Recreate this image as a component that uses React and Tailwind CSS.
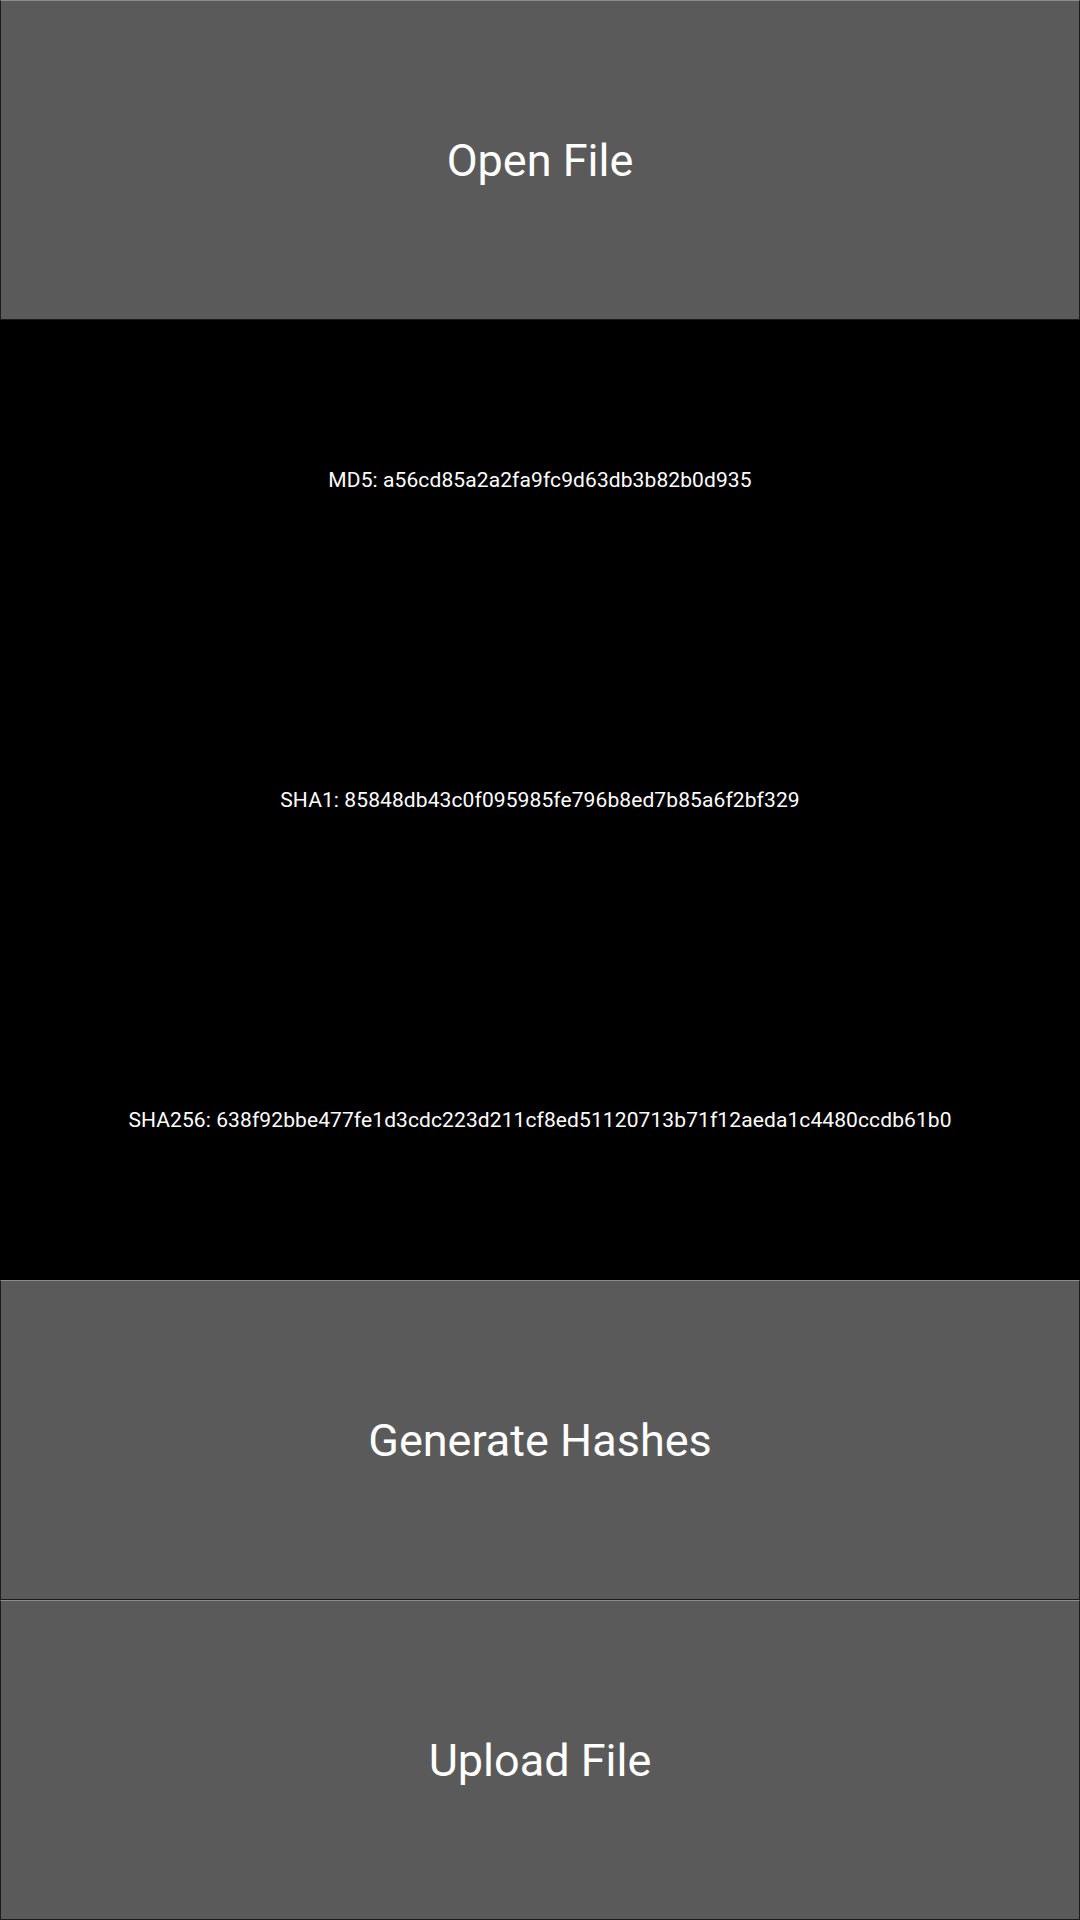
import React from 'react';

const hashes = [
  { label: 'MD5', value: 'a56cd85a2a2fa9fc9d63db3b82b0d935' },
  { label: 'SHA1', value: '85848db43c0f095985fe796b8ed7b85a6f2bf329' },
  { label: 'SHA256', value: '638f92bbe477fe1d3cdc223d211cf8ed51120713b71f12aeda1c4480ccdb61b0' },
];

const ActionButton = ({ children }) => (
  <button className="h-[320px] w-full bg-[#5a5a5a] border border-[#1c1c1c] border-t-[#8c8c8c] text-white text-[45px] flex items-center justify-center pt-[2px]">
    {children}
  </button>
);

export default function App() {
  return (
    <div
      className="w-[1080px] h-[1920px] bg-black flex flex-col"
      style={{ fontFamily: 'Roboto, "Noto Sans", sans-serif' }}
    >
      <ActionButton>Open File</ActionButton>

      {hashes.map((h) => (
        <div key={h.label} className="h-[320px] flex items-center justify-center text-white text-[21px] tracking-[0.1px] pt-[2px]">
          {h.label}: {h.value}
        </div>
      ))}

      <ActionButton>Generate Hashes</ActionButton>
      <ActionButton>Upload File</ActionButton>
    </div>
  );
}
